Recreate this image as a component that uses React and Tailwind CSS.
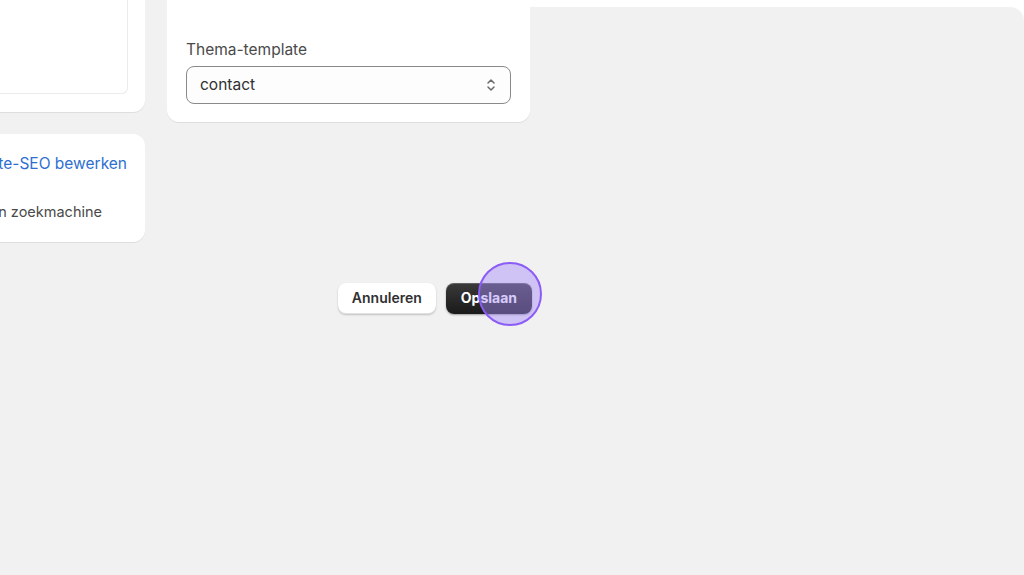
import React from "react";

const font = { fontFamily: "Inter, 'Noto Sans', sans-serif" };

const App = () => {
  return (
    <div
      className="relative w-[1024px] h-[575px] overflow-hidden bg-[#f1f1f1] flex"
      style={font}
    >
      {/* Content column (scrolled, cut off at the top and left) */}
      <div className="relative z-10 flex flex-col ml-[-255px] w-[785px] shrink-0">
        <div className="flex items-start gap-[22px]">
          {/* Left column */}
          <div className="w-[400px] flex flex-col gap-[22px]">
            <div className="bg-white rounded-b-xl shadow-[0_1px_0_rgba(0,0,0,0.08)] px-[17px] pb-[18px]">
              <div className="h-[94px] border border-[#ebebeb] border-t-0 rounded-b-md" />
            </div>
            <div className="bg-white rounded-xl shadow-[0_1px_0_rgba(0,0,0,0.08)] pl-[17px] pr-[18px] pt-[18px] pb-[18px]">
              <div className="flex items-center justify-between h-[24px]">
                <span className="text-[14px] font-semibold text-[#303030]">
                  Zoekmachinevermelding
                </span>
                <span className="text-[15.5px] text-[#2d6fd0]">
                  Website-SEO bewerken
                </span>
              </div>
              <p className="mt-[24px] h-[24px] leading-[24px] text-[14.5px] text-[#4a4a4a] whitespace-nowrap text-right pr-[25px]">
                Vermelding in zoekmachine
              </p>
            </div>
          </div>

          {/* Middle card */}
          <div className="w-[363px] bg-white rounded-b-xl shadow-[0_1px_0_rgba(0,0,0,0.08)] px-[19px] pt-[40px] pb-[18px]">
            <label className="block text-[15.5px] leading-[20px] text-[#4a4a4a] mb-[6px]">
              Thema-template
            </label>
            <div className="flex items-center justify-between h-[38px] rounded-lg border border-[#8a8a8a] bg-[#fdfdfd] pl-[13px] pr-[12px]">
              <span className="text-[15.5px] text-[#303030]">contact</span>
              <svg
                width="14"
                height="16"
                viewBox="0 0 14 16"
                fill="none"
                stroke="#6b6b6b"
                strokeWidth="1.5"
                strokeLinecap="round"
                strokeLinejoin="round"
              >
                <path d="M4 6l3-3 3 3" />
                <path d="M4 10l3 3 3-3" />
              </svg>
            </div>
          </div>
        </div>

        {/* Footer actions */}
        <div className="flex justify-end gap-[10px] mt-[41px] -mr-[2px]">
          <button className="h-[31px] px-[14px] pb-[3px] rounded-lg bg-white text-[14px] font-semibold text-[#303030] shadow-[0_1px_2px_rgba(0,0,0,0.2),inset_0_-1px_0_rgba(0,0,0,0.12)]">
            Annuleren
          </button>
          <button className="h-[31px] px-[15px] pb-[3px] rounded-lg bg-gradient-to-b from-[#3a3a3a] to-[#1a1a1a] text-[14px] font-bold text-white shadow-[0_1px_2px_rgba(0,0,0,0.35),inset_0_1px_0_rgba(255,255,255,0.2)]">
            Opslaan
          </button>
        </div>
      </div>

      {/* Right area: white top strip with rounded gray panel */}
      <div className="flex-1 bg-white">
        <div className="mt-[7px] h-full bg-[#f1f1f1] rounded-tr-[14px]" />
      </div>

      {/* Click highlight */}
      <div className="absolute z-20 left-[478px] top-[262px] w-[64px] h-[64px] rounded-full border-2 border-[#8b5cf6] bg-[rgba(167,139,250,0.45)]" />
    </div>
  );
};

export default App;
